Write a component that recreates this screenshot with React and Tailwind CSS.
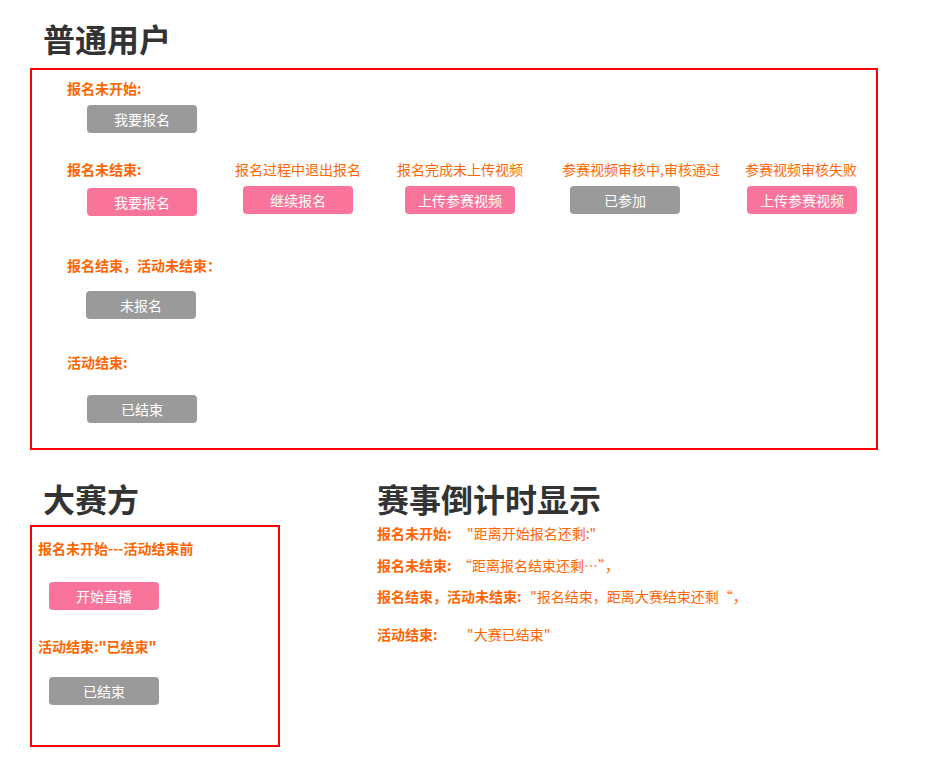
const font = { fontFamily: '"Microsoft YaHei", "Noto Sans CJK SC", sans-serif' }

function Btn({ children, pink, className = '' }) {
    return (
        <div className={`w-[110px] h-[28px] rounded-[4px] flex items-center justify-center text-[14px] text-white ${pink ? 'bg-[#f8749a]' : 'bg-[#9a9a9a]'} ${className}`}>
            {children}
        </div>
    )
}

function Label({ children, className = '' }) {
    return <div className={`text-[14px] leading-[20px] font-bold text-[#ff6600] whitespace-nowrap ${className}`}>{children}</div>
}

function Col({ w, label, btn, pink, btnClass = 'ml-[8px]' }) {
    return (
        <div className={`flex flex-col items-start ${w}`}>
            <div className="text-[14px] leading-[20px] text-[#ff6600] whitespace-nowrap">{label}</div>
            <Btn pink={pink} className={`mt-[7px] ${btnClass}`}>{btn}</Btn>
        </div>
    )
}

export default function App() {
    return (
        <div className="w-[937px] min-h-[779px] bg-white pl-[30px] pt-[18px]" style={font}>
            <h1 className="ml-[13px] text-[32px] leading-[40px] font-bold text-[#333]">普通用户</h1>

            <div className="mt-[10px] w-[848px] h-[382px] border-2 border-[#ff0000] pl-[35px] pt-[8px]">
                <Label>报名未开始:</Label>
                <Btn className="mt-[7px] ml-[20px]">我要报名</Btn>

                <div className="flex mt-[26px]">
                    <div className="flex flex-col items-start w-[168px]">
                        <Label>报名未结束:</Label>
                        <Btn pink className="mt-[9px] ml-[20px]">我要报名</Btn>
                    </div>
                    <Col w="w-[162px]" label="报名过程中退出报名" btn="继续报名" pink />
                    <Col w="w-[165px]" label="报名完成未上传视频" btn="上传参赛视频" pink />
                    <Col w="w-[183px]" label="参赛视频审核中,审核通过" btn="已参加" />
                    <Col w="w-[120px]" label="参赛视频审核失败" btn="上传参赛视频" pink btnClass="ml-[2px]" />
                </div>

                <Label className="mt-[39px]">报名结束，活动未结束：</Label>
                <Btn className="mt-[16px] ml-[19px]">未报名</Btn>

                <Label className="mt-[33px]">活动结束:</Label>
                <Btn className="mt-[23px] ml-[20px]">已结束</Btn>
            </div>

            <div className="flex mt-[28px]">
                <div className="w-[347px]">
                    <h2 className="ml-[13px] text-[32px] leading-[40px] font-bold text-[#333]">大赛方</h2>
                    <div className="mt-[7px] w-[250px] h-[222px] border-2 border-[#ff0000] pl-[6px] pt-[11px]">
                        <Label>报名未开始---活动结束前</Label>
                        <Btn pink className="mt-[24px] ml-[11px]">开始直播</Btn>
                        <Label className="mt-[26px]">活动结束:"已结束"</Label>
                        <Btn className="mt-[21px] ml-[11px]">已结束</Btn>
                    </div>
                </div>

                <div>
                    <h2 className="text-[32px] leading-[40px] font-bold text-[#333]">赛事倒计时显示</h2>
                    <div className="mt-[5px] text-[14px] leading-[20px] text-[#ff6600] whitespace-nowrap">
                        <div className="flex">
                            <span className="w-[90px] font-bold">报名未开始:</span>
                            <span>"距离开始报名还剩:"</span>
                        </div>
                        <div className="flex mt-[12px]">
                            <span className="w-[81px] font-bold">报名未结束:</span>
                            <span>“距离报名结束还剩…”，</span>
                        </div>
                        <div className="flex mt-[11px]">
                            <span className="w-[153px] font-bold">报名结束，活动未结束:</span>
                            <span>"报名结束，距离大赛结束还剩“，</span>
                        </div>
                        <div className="flex mt-[18px]">
                            <span className="w-[90px] font-bold">活动结束:</span>
                            <span>"大赛已结束"</span>
                        </div>
                    </div>
                </div>
            </div>
        </div>
    )
}
